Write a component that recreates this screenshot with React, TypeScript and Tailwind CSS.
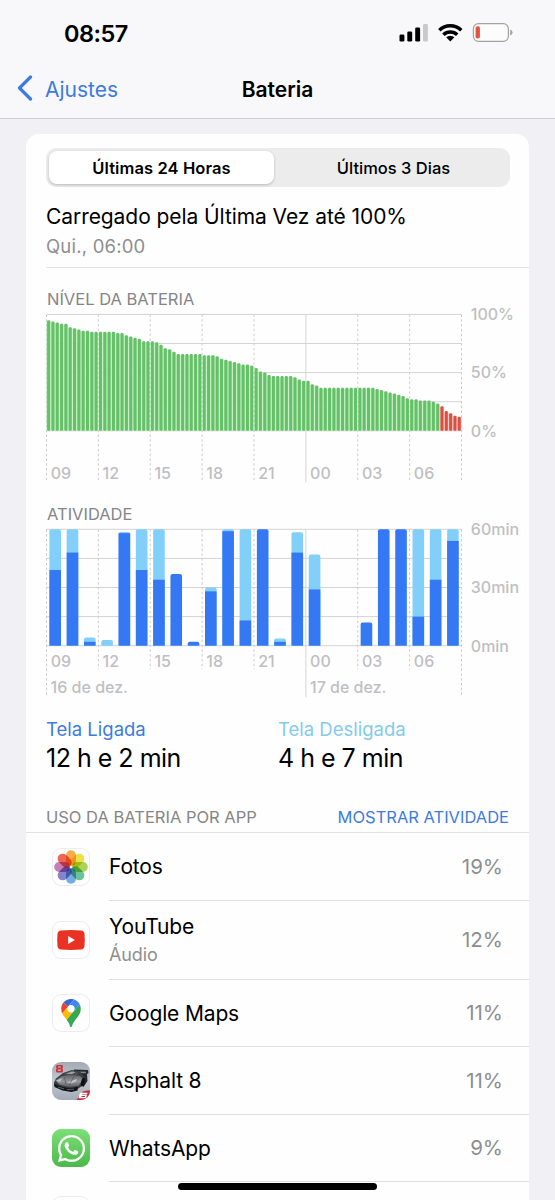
import React from 'react';
import { FaWhatsapp } from 'react-icons/fa';

interface AppUsage {
  name: string;
  detail?: string;
  percent: string;
  icon: React.ReactNode;
  rowClass: string;
}

const CHART_LEFT = 20.5;
const CHART_WIDTH = 415;
const CHART_HEIGHT = 116.4;
const HOUR = CHART_WIDTH / 24;

const hourLabels = ['09', '12', '15', '18', '21', '00', '03', '06'];

// One value per 15 minutes
const batteryLevels = [
  95, 94, 93, 92, 92, 89, 88, 87, 86, 86, 85, 85, 85, 85, 85, 85,
  84, 84, 82, 81, 80, 79, 77, 77, 77, 76, 74, 71, 70, 68, 66, 66,
  66, 66, 66, 66, 65, 65, 65, 64, 62, 61, 60, 59, 58, 57, 57, 56,
  54, 51, 50, 48, 47, 47, 47, 47, 47, 46, 44, 43, 43, 40, 39, 37,
  37, 37, 37, 37, 37, 37, 37, 37, 37, 37, 37, 37, 36, 35, 34, 33,
  32, 31, 30, 28, 27, 27, 26, 26, 26, 25, 23.5, 21, 17, 15, 13, 12,
];

// [screen on, screen off] in minutes for each hour
const activity: [number, number][] = [
  [39, 21], [48, 12], [2, 2.2], [0, 3], [58, 0.6], [39, 21], [34, 26], [37, 0],
  [2, 0], [28, 2], [59, 1], [13, 47], [60, 0], [2, 1.7], [48, 10.5], [29, 18],
  [0, 0], [0, 0], [12, 0], [60, 0], [60, 0], [15, 45], [34, 26], [54, 6],
];

const Grid: React.FC<{ top: number; shortEnd: number }> = ({ top, shortEnd }) => (
  <g fill="none" strokeWidth="1">
    {[0, 1, 2, 3, 4].map((i) => (
      <line
        key={i}
        x1={CHART_LEFT}
        x2={CHART_LEFT + CHART_WIDTH}
        y1={top + (CHART_HEIGHT / 4) * i}
        y2={top + (CHART_HEIGHT / 4) * i}
        stroke="#d3d3d5"
      />
    ))}
    {[0, 1, 2, 3, 4, 5, 6, 7, 8].map((i) => {
      const x = CHART_LEFT + HOUR * 3 * i;
      const solid = i === 5;
      const end = solid ? top + 168 : i === 0 || i === 8 ? top + 166 : shortEnd;
      return (
        <line
          key={i}
          x1={x}
          x2={x}
          y1={top}
          y2={end}
          stroke={solid ? '#d6d6d8' : '#cdcdd0'}
          strokeDasharray={solid ? undefined : '2.6 2.2'}
        />
      );
    })}
  </g>
);

const HourLabels: React.FC<{ y: number }> = ({ y }) => (
  <>
    {hourLabels.map((label, i) => (
      <text key={label} x={CHART_LEFT + HOUR * 3 * i + 4.2} y={y}>
        {label}
      </text>
    ))}
  </>
);

const SideLabels: React.FC<{ top: number; labels: string[] }> = ({ top, labels }) => (
  <>
    {labels.map((label, i) => (
      <text key={label} x={444.8} y={top + (CHART_HEIGHT / 2) * i + 5.8}>
        {label}
      </text>
    ))}
  </>
);

const LevelChart = () => {
  const top = 5.4;
  const bottom = top + CHART_HEIGHT;
  const step = CHART_WIDTH / batteryLevels.length;
  return (
    <svg width="503" height="175" viewBox="0 0 503 175" className="block overflow-visible fill-[#bfbfc2] text-[16px] font-medium">
      <Grid top={top} shortEnd={top + 166} />
      {batteryLevels.map((level, i) => {
        const height = (CHART_HEIGHT * level) / 100;
        const x = CHART_LEFT + step * i;
        const low = i > 90;
        return (
          <g key={i}>
            <rect x={x} y={bottom - height + 1} width={step} height={height - 1} fill={low ? '#f6c4be' : '#b9edb8'} />
            <rect x={x + 0.6} y={bottom - height} width={3} height={height} rx="1" fill={low ? '#dc4f43' : '#66bf69'} />
          </g>
        );
      })}
      {[1, 2, 3, 4, 6, 7].map((i) => (
        <line
          key={i}
          x1={CHART_LEFT + HOUR * 3 * i}
          x2={CHART_LEFT + HOUR * 3 * i}
          y1={top + 2}
          y2={bottom}
          stroke="#ffffff"
          strokeOpacity="0.45"
          strokeDasharray="2.6 2.2"
        />
      ))}
      <HourLabels y={169.7} />
      <SideLabels top={top} labels={['100%', '50%', '0%']} />
    </svg>
  );
};

const ActivityChart = () => {
  const top = 5.3;
  const bottom = top + CHART_HEIGHT;
  const barPath = (x: number, height: number) => {
    const y = bottom - height;
    const r = Math.min(2, height);
    return `M${x} ${bottom}V${y + r}q0 ${-r} ${r} ${-r}h${11.6 - 2 * r}q${r} 0 ${r} ${r}V${bottom}z`;
  };
  return (
    <svg width="503" height="175" viewBox="0 0 503 175" className="block overflow-visible fill-[#bfbfc2] text-[16px] font-medium">
      <Grid top={top} shortEnd={145.5} />
      {activity.map(([on, off], i) => {
        const x = CHART_LEFT + HOUR * i + 2.9;
        const onHeight = (CHART_HEIGHT * on) / 60;
        const total = (CHART_HEIGHT * (on + off)) / 60;
        if (total === 0) return null;
        return (
          <g key={i}>
            <path d={barPath(x, total)} fill={off > 0 ? '#82cffa' : '#3478f3'} />
            {off > 0 && <rect x={x} y={bottom - onHeight} width="11.6" height={onHeight} fill="#3478f3" />}
          </g>
        );
      })}
      <HourLabels y={143.4} />
      <text x="24.6" y="169.3">16 de dez.</text>
      <text x="284" y="169.3">17 de dez.</text>
      <SideLabels top={top} labels={['60min', '30min', '0min']} />
    </svg>
  );
};

const petals = ['#f7a53b', '#ecdf3a', '#a5cf4c', '#5fbd92', '#6ba6e0', '#7f78c4', '#c274b4', '#ee5a4c'];

const PhotosIcon = () => (
  <svg viewBox="0 0 38 38" className="isolate size-full">
    {petals.map((color, i) => (
      <rect
        key={color}
        x="14"
        y="2.200"
        width="10"
        height="15.600"
        rx="5"
        fill={color}
        fillOpacity="0.93"
        transform={`rotate(${i * 45} 19 19)`}
        className="mix-blend-multiply"
      />
    ))}
  </svg>
);

const YouTubeIcon = () => (
  <svg viewBox="0 0 38 38" className="size-full">
    <path
      d="M9 9.5q10-.9 20 0 3.2.2 3.5 3.3.6 6.2 0 12.4-.3 3.100-3.500 3.300-10 .9-20 0-3.200-.2-3.500-3.300-.6-6.200 0-12.400.3-3.100 3.500-3.300z"
      fill="#e93223"
    />
    <path d="M16.200 14.900v8.200l6.700-4.100z" fill="#fff" />
  </svg>
);

const MapsIcon = () => (
  <svg viewBox="0 0 38 38" className="size-full">
    <g transform="translate(9.2 5) scale(0.212)">
      <path fill="#3367d6" d="M60.2 2.2C55.8.8 51 0 46.100 0 32 0 19.300 6.400 10.800 16.500l21.800 18.300L60.200 2.200z" />
      <path fill="#ea4335" d="M10.800 16.500C4.100 24.500 0 34.900 0 46.100c0 8.700 1.700 15.700 4.600 22l28-33.300-21.800-18.300z" />
      <path fill="#4285f4" d="M46.200 28.500c9.800 0 17.700 7.900 17.700 17.700 0 4.300-1.600 8.300-4.200 11.400 0 0 13.900-16.600 27.500-32.700-5.600-10.800-15.300-19-27-22.700L32.600 34.800c3.300-3.800 8.100-6.300 13.600-6.300" />
      <path fill="#fbbc04" d="M46.200 63.800c-9.800 0-17.700-7.900-17.700-17.700 0-4.300 1.500-8.300 4.100-11.300l-28 33.300c4.800 10.600 12.800 19.200 21 29.900l34.100-40.500c-3.300 3.900-8.100 6.300-13.500 6.300" />
      <path fill="#34a853" d="M59.100 109.200c15.400-24.100 33.300-35 33.300-63 0-7.700-1.900-14.900-5.200-21.300L25.600 98c2.600 3.400 5.300 7.300 7.900 11.300 9.400 14.500 6.800 23.100 12.800 23.100s3.400-8.700 12.800-23.200" />
    </g>
  </svg>
);

const AsphaltIcon = () => (
  <svg viewBox="0 0 38 38" className="size-full">
    <defs>
      <linearGradient id="asphalt-bg" x1="0" y1="0" x2="0" y2="1">
        <stop offset="0" stopColor="#a3aab5" />
        <stop offset="0.5" stopColor="#c4c9d1" />
        <stop offset="1" stopColor="#a2aab7" />
      </linearGradient>
      <linearGradient id="asphalt-hood" x1="0" y1="0" x2="0" y2="1">
        <stop offset="0" stopColor="#5b5e63" />
        <stop offset="0.55" stopColor="#94989d" />
        <stop offset="1" stopColor="#5a5e63" />
      </linearGradient>
    </defs>
    <rect width="38" height="38" fill="url(#asphalt-bg)" />
    {/* Spoiler and rear */}
    <path d="M22 7.500l14 .5 .5 3-1.500 1 .5 7-4 6-9-8z" fill="#26282c" />
    <path d="M25 9.500l9 .3-.3 1.500-7-.3z" fill="#85898f" />
    {/* Body */}
    <path d="M2 20.500l2-4 7-5.500 9-3 8 1.500 5 6-2 8-7 4.500-13-1L2.500 24z" fill="#3a3d42" />
    <path d="M3.500 18.500l6.500-4.500 9-1.500 9 1.500 3 3-4.500 7-10 1-9-2.500z" fill="url(#asphalt-hood)" />
    <path d="M11 12l9-3.400 6.500 1.400-1.500 3.400-8.500-.3z" fill="#4b4f54" />
    <path d="M13.500 11.800l6.500-2.300 3.500.8-3.500 1.700z" fill="#a1a5a9" />
    <path d="M4.500 18.500l6-2.500-2.500 3.700z M15 20.500l10-3.500-1 2.500-5 2z" fill="#c3c6c9" />
    <path d="M12.500 15.500l1.500 7M22 14.500l-5 9" stroke="#4a4d51" strokeWidth="0.600" />
    {/* Front bumper */}
    <path d="M2 21.500q8 4.500 18 4.500l6-1.500-.5 4-6 1.500-9-1.500-8-3.500z" fill="#131518" />
    <path d="M6 25.200l6 1.600M15 27.500l7-.3" stroke="#7b7f85" strokeWidth="0.700" />
    <ellipse cx="31" cy="20" rx="1.900" ry="4.300" transform="rotate(12 31 20)" fill="#0f1113" />
    {/* Badges */}
    <path d="M38 28.500H35L31 29.500 24.500 38H38z" fill="#c62f34" />
    <path d="M28.300 30.700h7.200l-.3 1.500h-5.400v.6h5.200l-.8 3.400h-7.500l.5-3.300zM29.500 34l-.2 1h3.600l.2-1z" fill="#fff" />
    <path d="M5 3h5.200l.7.8v1.900l-.7.7.7.8v2.400l-.8.8H4.700l-.7-.8V7.200l.7-.8-.6-.7V3.800z" fill="#c9343a" />
    <path d="M6 4.600h2.900v1H6zM5.900 7.500h3v1.200h-3z" fill="#c5cad2" />
  </svg>
);

const WhatsAppIcon = () => (
  <div className="flex size-full items-center justify-center bg-gradient-to-b from-[#7be077] to-[#4bb94a]">
    <FaWhatsapp className="size-[31px] text-white" />
  </div>
);

const apps: AppUsage[] = [
  { name: 'Fotos', percent: '19%', icon: <PhotosIcon />, rowClass: 'h-[68px]' },
  { name: 'YouTube', detail: 'Áudio', percent: '12%', icon: <YouTubeIcon />, rowClass: 'h-[79px]' },
  { name: 'Google Maps', percent: '11%', icon: <MapsIcon />, rowClass: 'h-[67px]' },
  { name: 'Asphalt 8', percent: '11%', icon: <AsphaltIcon />, rowClass: 'h-[68px]' },
  { name: 'WhatsApp', percent: '9%', icon: <WhatsAppIcon />, rowClass: 'h-[67px]' },
];

const AppRow: React.FC<{ app: AppUsage }> = ({ app }) => (
  <li className={`flex items-center pl-[26px] ${app.rowClass}`}>
    <div className="mb-px size-[38px] shrink-0 overflow-hidden rounded-[9px] shadow-[inset_0_0_0_1px_#ececee]">
      {app.icon}
    </div>
    <div className="ml-[19px] flex h-full flex-1 items-center justify-between border-b border-[#dededf] pt-px pr-[26px]">
      <div>
        <p className="text-[21px] leading-7 tracking-[-0.15px] text-black">{app.name}</p>
        {app.detail && <p className="text-[18px] leading-7 tracking-[-0.1px] text-[#8e8e90]">{app.detail}</p>}
      </div>
      <span className="text-[20.5px] text-[#8e8e90]">{app.percent}</span>
    </div>
  </li>
);

const StatusIcons = () => (
  <svg width="116" height="22" viewBox="398 22 116 22" className="mr-[41px]">
    <rect x="399.500" y="34.500" width="4.900" height="7" rx="1.300" />
    <rect x="407.300" y="31.500" width="4.900" height="10" rx="1.300" />
    <rect x="415.200" y="27.500" width="4.900" height="14" rx="1.300" />
    <rect x="423" y="24" width="4.900" height="17.500" rx="1.300" fill="#c9c9ca" />
    <g fill="none" stroke="#000" strokeWidth="3.500">
      <path d="M439.300 30.200a16 16 0 0 1 22 0" />
      <path d="M443.400 34.700a10 10 0 0 1 13.800 0" />
    </g>
    <path d="M446.200 37.300a6 6 0 0 1 8.200 0l-4.100 4.300z" />
    <rect x="473.400" y="23.700" width="35" height="17.600" rx="5" fill="#fff" fillOpacity="0.6" stroke="#a2a2a4" strokeWidth="1.200" />
    <path d="M510.200 29.500q2.400.8 2.400 3t-2.400 3z" fill="#a2a2a4" />
    <rect x="475.600" y="26.200" width="4.300" height="12.400" rx="1.800" fill="#e8503f" />
  </svg>
);

const App: React.FC = () => {
  return (
    <div className="relative h-[1200px] w-[555px] overflow-hidden bg-[#f0f0f5] font-['Inter',sans-serif] text-black">
      {/* Header */}
      <header className="h-[119px] border-b border-[#d0d0d3] bg-[#f8f8fa]">
        <div className="flex h-[66px] items-center justify-between pl-16">
          <span className="pt-0.5 text-[23.5px] font-semibold tracking-[-0.5px]">08:57</span>
          <StatusIcons />
        </div>
        <div className="grid h-[48px] grid-cols-3 items-center">
          <div className="flex items-center gap-[11px] pl-[17px] text-[#3d7be0]">
            <svg width="17" height="26" viewBox="0 0 17 26" fill="none" stroke="currentColor" strokeWidth="3.200" strokeLinecap="round" strokeLinejoin="round" className="mb-1">
              <path d="M13.500 2L2.500 13l11 11" />
            </svg>
            <span className="text-[21px]">Ajustes</span>
          </div>
          <h1 className="text-center text-[21px] font-semibold">Bateria</h1>
        </div>
      </header>

      <main className="mx-[26px] mt-[15px] h-[1100px] rounded-t-[13px] bg-[#fefefe] pt-[14px]">
        {/* Period selector */}
        <div className="ml-5 flex h-[39px] w-[464px] rounded-[10px] bg-[#ececed] p-[3px] text-[16.5px]">
          <button className="h-[33px] w-[225px] rounded-[8px] bg-white pt-px font-semibold tracking-[0.1px] shadow-[0_1px_3px_rgba(0,0,0,0.22)]">
            Últimas 24 Horas
          </button>
          <button className="flex-1 pt-px pl-1.5 font-medium">Últimos 3 Dias</button>
        </div>

        <div className="ml-5 h-[81px] border-b border-[#e2e2e4] pt-4">
          <p className="text-[21px] leading-7 tracking-[-0.07px]">Carregado pela Última Vez até 100%</p>
          <p className="mt-[3px] text-[18.5px] leading-6 tracking-[0.2px] text-[#8e8e90]">Qui., 06:00</p>
        </div>

        {/* Charts */}
        <h2 className="mt-[21px] pl-[21px] text-[16.5px] leading-5 text-[#858587]">NÍVEL DA BATERIA</h2>
        <LevelChart />
        <h2 className="mt-5 pl-[21px] text-[16.5px] leading-5 text-[#858587]">ATIVIDADE</h2>
        <ActivityChart />

        {/* Screen time */}
        <div className="mt-[18px] grid grid-cols-[232px_1fr] pl-5">
          <div>
            <p className="text-[18.5px] leading-6 text-[#3d7be0]">Tela Ligada</p>
            <p className="mt-px text-[25px] leading-8 tracking-[-0.5px]">12 h e 2 min</p>
          </div>
          <div>
            <p className="text-[18.5px] leading-6 text-[#83cbec]">Tela Desligada</p>
            <p className="mt-px text-[25px] leading-8 tracking-[-0.5px]">4 h e 7 min</p>
          </div>
        </div>

        {/* Usage list */}
        <div className="mt-[33px] flex h-[26px] items-start justify-between border-b border-[#e2e2e4] pr-5 pl-5 text-[16.5px] leading-5">
          <h2 className="text-[#858587]">USO DA BATERIA POR APP</h2>
          <button className="text-[#3d7be0]">MOSTRAR ATIVIDADE</button>
        </div>
        <ul>
          {apps.map((app) => (
            <AppRow key={app.name} app={app} />
          ))}
          <li className="pt-[14px] pl-[26px]">
            <div className="size-[38px] rounded-[9px] border border-[#ececee]" />
          </li>
        </ul>
      </main>

      {/* Home indicator */}
      <div className="absolute top-[1183px] left-[178px] h-[7px] w-[199px] rounded-full bg-black" />
    </div>
  );
};

export default App;
